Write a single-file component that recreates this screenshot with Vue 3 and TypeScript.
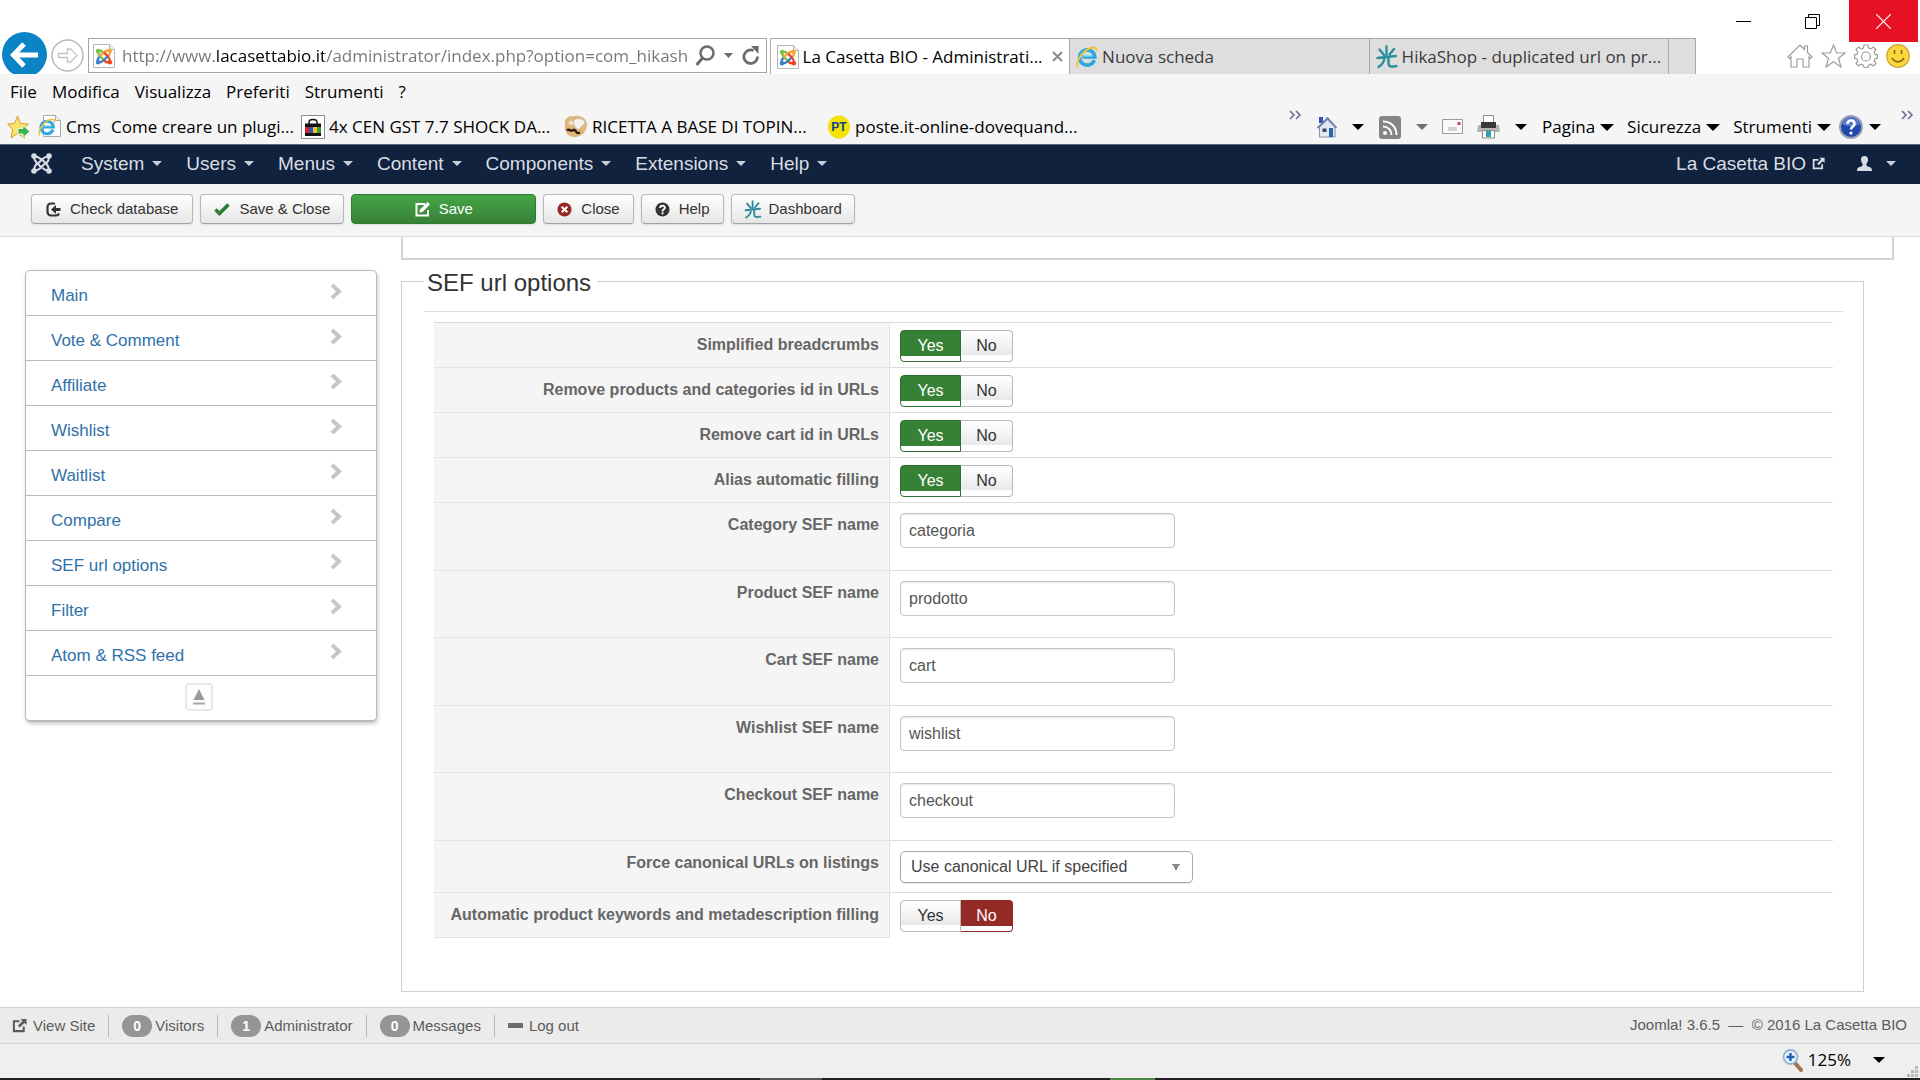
<script setup lang="ts">
import { ref } from 'vue'

interface Toggle { kind: 'toggle'; id: string; label: string; value: boolean }
interface TextField { kind: 'text'; id: string; label: string; value: string }
interface Choice { kind: 'select'; id: string; label: string; value: string }
type Option = Toggle | TextField | Choice

const url = ref('http://www.lacasettabio.it/administrator/index.php?option=com_hikash')
const browserMenu = ['File', 'Modifica', 'Visualizza', 'Preferiti', 'Strumenti', '?']
const adminMenu = ['System', 'Users', 'Menus', 'Content', 'Components', 'Extensions', 'Help']
const sections = [
  'Main', 'Vote & Comment', 'Affiliate', 'Wishlist', 'Waitlist',
  'Compare', 'SEF url options', 'Filter', 'Atom & RSS feed',
]
const counters = [
  { count: 0, label: 'Visitors' },
  { count: 1, label: 'Administrator' },
  { count: 0, label: 'Messages' },
]
const options = ref<Option[]>([
  { kind: 'toggle', id: 'breadcrumbs', label: 'Simplified breadcrumbs', value: true },
  { kind: 'toggle', id: 'remove-id', label: 'Remove products and categories id in URLs', value: true },
  { kind: 'toggle', id: 'remove-cart', label: 'Remove cart id in URLs', value: true },
  { kind: 'toggle', id: 'alias', label: 'Alias automatic filling', value: true },
  { kind: 'text', id: 'category', label: 'Category SEF name', value: 'categoria' },
  { kind: 'text', id: 'product', label: 'Product SEF name', value: 'prodotto' },
  { kind: 'text', id: 'cart', label: 'Cart SEF name', value: 'cart' },
  { kind: 'text', id: 'wishlist', label: 'Wishlist SEF name', value: 'wishlist' },
  { kind: 'text', id: 'checkout', label: 'Checkout SEF name', value: 'checkout' },
  { kind: 'select', id: 'canonical', label: 'Force canonical URLs on listings', value: 'Use canonical URL if specified' },
  { kind: 'toggle', id: 'keywords', label: 'Automatic product keywords and metadescription filling', value: false },
])
</script>

<template>
  <div class="window">
    <svg class="defs" width="0" height="0" aria-hidden="true">
      <defs>
        <symbol id="joomla-page" viewBox="0 0 22 24">
          <path d="M.5.5h16l5 5v18H.5z" fill="#fff" stroke="#b5b5b5" />
          <path d="M16.500.5v5h5" fill="#eee" stroke="#b5b5b5" />
          <g fill="none" stroke-width="2.400">
            <path d="M5 7.500c0 3 1 3.500 3 5.500l3.500 3.500M5 7c3-1 4 0 5 1.500" stroke="#7ac143" />
            <path d="M16 6.500c-3 0-4 .5-5.500 2L7 12M16.500 7c1 3 0 4-1.500 5" stroke="#f9a541" />
            <path d="M17 17.500c0-3-1-4-2.500-5.500L11 8.500M16.500 18c-3 1-4 0-5-1.500" stroke="#f44321" />
            <path d="M5.500 18.500c3 0 4-1 5.500-2.500l3.500-3.500M5 18c-1-3 0-4 1.500-5" stroke="#3f7fc4" />
          </g>
          <circle cx="5" cy="7" r="2.200" fill="#7ac143" />
          <circle cx="16.800" cy="6.800" r="2.200" fill="#f9a541" />
          <circle cx="17" cy="18.200" r="2.200" fill="#f44321" />
          <circle cx="5" cy="18.200" r="2.200" fill="#3f7fc4" />
        </symbol>
        <symbol id="ie" viewBox="0 0 24 24">
          <path d="M20 15.500A8.300 8.300 0 1 1 20.500 12H7" fill="none" stroke="#2ea7df" stroke-width="4" />
          <path d="M8 10.500h10" stroke="#8fdcf7" stroke-width="2" />
          <path d="M2.500 23C-1 18 6 6 15 2.500 20 .5 23 2 22 6" fill="none" stroke="#f3c232" stroke-width="2" />
        </symbol>
        <symbol id="hika" viewBox="0 0 22 24">
          <g fill="none" stroke="#2b8f9c" stroke-width="2.400" stroke-linecap="round">
            <path d="M10.500 1.500V12M3.500 4.500 8 10M18 4 13.500 9.500M1.500 13 20 11M8.500 12c0 5-2 7.500-6 10M12.500 12v6c0 4 3 4 8 3" />
          </g>
        </symbol>
        <symbol id="popout" viewBox="0 0 16 16">
          <path d="M8 3.500H2v10.500h10.500V9" fill="none" stroke="currentColor" stroke-width="2.200" />
          <path d="M9 1h6.500v6.500l-2.300-2.300-5 5-2-2 5-5z" fill="currentColor" />
        </symbol>
      </defs>
    </svg>

    <header class="titlebar">
      <div class="navigation">
        <button class="bare back" aria-label="Back">
          <svg width="46" height="42" viewBox="0 0 46 42"><circle cx="23.500" cy="22.500" r="22.500" fill="#0b84c6" /><path d="M37 23H13M23 12 12.500 23 23 34" fill="none" stroke="#fff" stroke-width="5" /></svg>
        </button>
        <button class="bare forward" aria-label="Forward">
          <svg width="33" height="33" viewBox="0 0 33 33"><circle cx="16.500" cy="16.500" r="15.500" fill="#fff" stroke="#b9b9b9" stroke-width="1.500" /><path d="M7.500 14.500h9V10h3l6.500 6.500-6.500 6.500h-3v-4.500h-9z" fill="#fff" stroke="#c4c4c4" stroke-width="1.300" /></svg>
        </button>
        <div class="address">
          <svg width="22" height="24"><use href="#joomla-page" /></svg>
          <input v-model="url" class="url" type="text" aria-label="Address">
          <svg width="20" height="22" viewBox="0 0 20 22"><circle cx="12" cy="8" r="6.500" fill="none" stroke="#6b6b6b" stroke-width="2.500" /><path d="M7.500 13 1.500 20" stroke="#6b6b6b" stroke-width="3" /></svg>
          <svg class="history" width="9" height="5" viewBox="0 0 9 5"><path d="M0 0h9L4.500 5z" fill="#6b6b6b" /></svg>
          <svg width="18" height="20" viewBox="0 0 18 20"><path d="M15.500 10.500a6.800 6.800 0 1 1-4-6" fill="none" stroke="#6b6b6b" stroke-width="2.800" /><path d="M9 0h7.500v8z" fill="#6b6b6b" /></svg>
        </div>
      </div>

      <div class="tabs">
        <a class="tab current" href="#"><svg width="22" height="24"><use href="#joomla-page" /></svg><span>La Casetta BIO - Administrati...</span><svg class="close" width="11" height="11" viewBox="0 0 11 11"><path d="m1 1 9 9M10 1 1 10" stroke="#8a8a8a" stroke-width="2" /></svg></a>
        <a class="tab" href="#"><svg width="22" height="24"><use href="#ie" /></svg><span>Nuova scheda</span></a>
        <a class="tab" href="#"><svg width="22" height="24"><use href="#hika" /></svg><span>HikaShop - duplicated url on pr...</span></a>
        <button class="bare new-tab" aria-label="New tab"></button>
      </div>

      <div class="corner">
        <div class="controls">
          <button class="bare" aria-label="Minimize"><svg width="15" height="15" viewBox="0 0 15 15"><path d="M0 7.500h15" stroke="#000" /></svg></button>
          <button class="bare" aria-label="Restore"><svg width="15" height="15" viewBox="0 0 15 15"><path d="M.5 3.500h11v11H.5zM3.500 3.500v-3h11v11h-3" fill="none" stroke="#000" /></svg></button>
          <button class="bare quit" aria-label="Close window"><svg width="15" height="15" viewBox="0 0 15 15"><path d="m0 0 15 15M15 0 0 15" stroke="#fff" stroke-width="1.200" /></svg></button>
        </div>
        <div class="tools">
          <svg width="26" height="24" viewBox="0 0 26 24"><path d="M1 13 13 1l4.500 4.500V2h3v6.500L25 13l-1.500 1.500L22 13v10h-6v-8h-6v8H4V13l-1.500 1.500z" fill="#fff" stroke="#9c9c9c" stroke-width="1.200" /></svg>
          <svg width="25" height="24" viewBox="0 0 25 24"><path d="m12.500 1 3.200 8H24l-6.500 5.200 2.500 8.800-7.500-5.300L5 23l2.500-8.800L1 9h8.300z" fill="#fff" stroke="#9c9c9c" stroke-width="1.200" /></svg>
          <svg width="24" height="24" viewBox="0 0 24 24"><path d="M10 1h4l.6 3 2.200.9L19.400 3 22 5.600l-1.800 2.600.9 2.200 2.400.4v3.400l-2.400.5-.9 2.200L22 19.400 19.400 22l-2.600-1.800-2.200.9L14 23.500h-4l-.6-2.400-2.200-.9L4.600 22 2 19.400l1.800-2.500-.9-2.200L.5 14.200v-3.400l2.400-.4.9-2.200L2 5.600 4.600 3l2.600 1.900L9.400 4z" fill="#fff" stroke="#9c9c9c" stroke-width="1.200" /><circle cx="12" cy="12.500" r="4.500" fill="#fff" stroke="#9c9c9c" stroke-width="1.200" /></svg>
          <svg width="24" height="24" viewBox="0 0 24 24"><circle cx="12" cy="12" r="11.300" fill="#fbd63d" stroke="#c9a437" stroke-width="1.200" /><path d="M8.500 6v4M15.500 6v4M6 14c3 5 9 5 12 0" fill="none" stroke="#8a6a14" stroke-width="1.600" /></svg>
        </div>
      </div>
    </header>

    <nav class="browser-menu" aria-label="Browser menu">
      <a v-for="item in browserMenu" :key="item" href="#">{{ item }}</a>
    </nav>

    <div class="link-bar">
      <div class="favourites">
        <svg width="24" height="24" viewBox="0 0 24 24"><path d="m10.500 1 3 7.500 8 .5-6 5.500 2 8.500-7-4.500L4 23l1.500-8.500L.8 9l6.700-.5z" fill="#fbe36b" stroke="#cfa02c" /><path d="M11 13.500h5v-3l7 6-7 6v-3.500h-5z" fill="#3fb24a" stroke="#eafbe6" /></svg>
        <svg width="23" height="24" viewBox="0 0 23 24"><path d="M5.500.5h12l5 5v16h-17z" fill="#fff" stroke="#a9a9a9" /><path d="M17.500.5v5h5" fill="#eee" stroke="#a9a9a9" /><use href="#ie" x="0" y="3" width="18" height="18" /></svg>
        <a href="#">Cms</a>
        <a href="#">Come creare un plugi...</a>
        <svg width="24" height="24" viewBox="0 0 24 24"><path d="M.5.5h23v23H.5z" fill="#fff" stroke="#8b8b8b" /><path d="M8 9V7c0-3.500 8-3.500 8 0v2" fill="none" stroke="#111" stroke-width="1.500" /><path d="M4 8.500h16V21H4z" fill="#111" /><path d="M4 12h4v6H4z" fill="#d22" /><path d="M8 12h4v6H8z" fill="#2459c4" /><path d="M12 12h4v6h-4z" fill="#f3c21b" /><path d="M16 12h4v6h-4z" fill="#3c9b35" /></svg>
        <a href="#">4x CEN GST 7.7 SHOCK DA...</a>
        <svg width="24" height="24" viewBox="0 0 24 24"><path d="M1 8C0 4 5 0 9 1.500 14-1 23 3 23 9c0 5-2 9-6 11-5 4-13 2-15-3C0 14 1 11 1 8z" fill="#dfb67c" /><path d="M10 5c4-3 11-1 11 3-1 3-5 3-6 7-3-1-7-5-5-10z" fill="#f6f2ec" stroke="#c3b39c" stroke-width=".8" /><circle cx="7" cy="8" r="2.500" fill="#f3e0bd" /><path d="M3 15.500c2-2 4 1 5.500 0s2.500-1 3.500 1 2 2 4 1" fill="none" stroke="#2d1a0f" stroke-width="2.500" /></svg>
        <a href="#">RICETTA A BASE DI TOPIN...</a>
        <svg width="22" height="24" viewBox="0 0 22 24"><ellipse cx="11" cy="12" rx="11" ry="11.500" fill="#f2e205" /><text x="11" y="16" text-anchor="middle" font-family="Liberation Sans, sans-serif" font-size="12" font-weight="700" fill="#15408f">PT</text></svg>
        <a href="#">poste.it-online-dovequand...</a>
      </div>
      <div class="commands">
        <svg class="more" width="13" height="10" viewBox="0 0 13 10"><path d="m1 1 4 4-4 4M7 1l4 4-4 4" fill="none" stroke="#6d6a9c" stroke-width="1.600" /></svg>
        <svg width="20" height="22" viewBox="0 0 20 22"><path d="M2 1h4v6H2z" fill="#3450b5" /><path d="M2.500 11v10h15.500V11L10.500 4z" fill="#e3e8ef" stroke="#8593ad" /><path d="M.5 12 10.500 2 19.500 12" fill="none" stroke="#6b7fae" stroke-width="1.800" /><path d="M12 12h4v9h-4z" fill="#2f63b3" /><path d="M5.500 12.500h4V16h-4z" fill="#3a4a66" /></svg>
        <i class="caret"></i>
        <svg width="22" height="23" viewBox="0 0 22 23"><rect width="22" height="23" rx="3" fill="#858585" /><circle cx="6" cy="17" r="2" fill="#fff" /><path d="M4 10.500c5 0 8.500 3.500 8.500 8.500M4 5.500C12 5.500 17.500 11 17.500 19" fill="none" stroke="#fff" stroke-width="2" /></svg>
        <i class="caret muted"></i>
        <svg width="21" height="16" viewBox="0 0 21 16"><path d="M.5.5h20v14H.5z" fill="#fafafa" stroke="#9a9a9a" /><path d="M15.500 3h3v3h-3z" fill="#d0455b" /><path d="M6 9h9M6 11h9" stroke="#a9a9b5" /></svg>
        <svg width="23" height="24" viewBox="0 0 23 24"><path d="M6.500.5h10V9h-10z" fill="#fff" stroke="#8b8b8b" /><path d="M1 10h21l1 7H0z" fill="#b5b5b5" /><path d="M4 7h15v6H4z" fill="#3a3a3a" /><path d="M5.500 15.500h12v7.500h-12z" fill="#fff" stroke="#888" /><path d="M9 16h5v6H9z" fill="#2a9fb5" /></svg>
        <i class="caret"></i>
        <a href="#">Pagina<i class="caret wide"></i></a>
        <a href="#">Sicurezza<i class="caret wide"></i></a>
        <a href="#">Strumenti<i class="caret wide"></i></a>
        <svg width="24" height="24" viewBox="0 0 24 24"><circle cx="12" cy="12" r="11" fill="#1f49ad" stroke="#9aa3b5" stroke-width="2" /><path d="M3 9a9.500 9.500 0 0 1 18 0c-5 3-13 3-18 0z" fill="#6d92e0" opacity=".7" /><path d="M8.500 9c0-5 7.500-4.500 7 0-.3 2.500-3.500 2.500-3.500 5.500" fill="none" stroke="#fff" stroke-width="2.600" /><circle cx="12" cy="18" r="1.600" fill="#fff" /></svg>
        <i class="caret help-caret"></i>
        <svg class="more" width="13" height="10" viewBox="0 0 13 10"><path d="m1 1 4 4-4 4M7 1l4 4-4 4" fill="none" stroke="#6d6a9c" stroke-width="1.600" /></svg>
      </div>
    </div>

    <nav class="admin-menu" aria-label="Administration">
      <svg class="logo" width="21" height="21" viewBox="0 0 21 21"><g fill="none" stroke="#d9dde3" stroke-width="2.200"><path d="M3 3.500c0 3 .5 4 2.500 6l5.500 5.500M3 3.500c3 0 4.500.5 6 2l1.500 1.500M18 3.500c-3 0-4.500.5-6.500 2.500L6 11.500M18 3.500c0 3-.5 4.500-2.500 6.500M18 17.500c0-3-.5-4.500-2.500-6.500L10 5.500M18 17.500c-3 0-4.500-.5-6.500-2.500M3 17.500c3 0 4.500-.5 6.500-2.500L15 9.500M3 17.500c0-3 .5-4.500 2.500-6.500" /></g><g fill="#d9dde3"><circle cx="3" cy="3" r="2.800" /><circle cx="18" cy="3" r="2.800" /><circle cx="3" cy="18" r="2.800" /><circle cx="18" cy="18" r="2.800" /></g></svg>
      <a v-for="item in adminMenu" :key="item" href="#">{{ item }}<i class="caret small"></i></a>
      <a class="site" href="#">La Casetta BIO<svg width="13" height="13"><use href="#popout" width="13" height="13" /></svg></a>
      <a class="user" href="#" aria-label="User menu"><svg width="15" height="15" viewBox="0 0 15 15"><path d="M7.500 0c2.500 0 3.800 1.800 3.500 4-.2 2-1 3.200-1.700 4 0 2 .7 2 3 3 2 .8 2.700 1.500 2.700 4H0c0-2.500.7-3.200 2.700-4 2.300-1 3-1 3-3C5 7.200 4.200 6 4 4c-.3-2.200 1-4 3.500-4z" fill="#d9dde3" /></svg><i class="caret small"></i></a>
    </nav>

    <div class="toolbar">
      <button class="action roomy"><svg width="15" height="15" viewBox="0 0 15 15"><path d="M9 1.500H5A3.500 3.500 0 0 0 1.500 5v5A3.500 3.500 0 0 0 5 13.500h5c1.500 0 2.500-.8 3-2" fill="none" stroke="#333" stroke-width="2.200" /><path d="M5 7.500 10 3v3h4.500v3H10v3z" fill="#333" /></svg>Check database</button>
      <button class="action"><svg width="16" height="13" viewBox="0 0 16 13"><path d="m1.500 6.500 4 4L14.500 1.500" fill="none" stroke="#2f7d32" stroke-width="3.600" /></svg>Save &amp; Close</button>
      <button class="action primary"><svg width="15" height="15" viewBox="0 0 15 15"><path d="M10 2H1.500v11.500H13V8" fill="none" stroke="#fff" stroke-width="2" /><path d="M5 7.500 12.500 0 15 2.500 7.500 10 4.500 10.500z" fill="#fff" /></svg>Save</button>
      <button class="action"><svg width="15" height="15" viewBox="0 0 16 16"><circle cx="8" cy="8" r="7.500" fill="#942a25" /><path d="m5 5 6 6M11 5l-6 6" stroke="#fff" stroke-width="2.200" /></svg>Close</button>
      <button class="action"><svg width="15" height="15" viewBox="0 0 16 16"><circle cx="8" cy="8" r="7.500" fill="#333" /><path d="M5.500 6.500c0-3.500 5-3.200 5-.5 0 1.800-2.500 1.800-2.500 4" fill="none" stroke="#fff" stroke-width="2" /><circle cx="8" cy="12" r="1.200" fill="#fff" /></svg>Help</button>
      <button class="action compact"><svg width="18" height="19" viewBox="0 0 22 24"><use href="#hika" /></svg>Dashboard</button>
    </div>

    <main class="page">
      <nav class="sections" aria-label="Configuration sections">
        <a v-for="section in sections" :key="section" href="#">{{ section }}<svg width="12" height="17" viewBox="0 0 12 17"><path d="m2 2 7 6.500L2 15" fill="none" stroke="#c6c6c6" stroke-width="4" /></svg></a>
        <div class="to-top">
          <button aria-label="Back to top"><svg width="14" height="17" viewBox="0 0 14 17"><path d="M7 0 12.500 11h-11z" fill="#999" /><path d="M1 14.500h12" stroke="#aaa" stroke-width="2" /></svg></button>
        </div>
      </nav>

      <form class="settings" @submit.prevent>
        <div class="previous-group"></div>
        <fieldset class="group">
          <legend>SEF url options</legend>
          <table>
            <tbody>
              <tr v-for="option in options" :key="option.id" :class="option.kind">
                <th scope="row"><label :for="option.kind === 'toggle' ? option.id + '-yes' : option.id">{{ option.label }}</label></th>
                <td>
                  <div v-if="option.kind === 'toggle'" class="switch">
                    <label :class="{ yes: option.value }"><input :id="option.id + '-yes'" v-model="option.value" type="radio" :name="option.id" :value="true">Yes</label>
                    <label :class="{ no: !option.value }"><input v-model="option.value" type="radio" :name="option.id" :value="false">No</label>
                  </div>
                  <input v-else-if="option.kind === 'text'" :id="option.id" v-model="option.value" class="field" type="text">
                  <select v-else :id="option.id" v-model="option.value" class="chooser">
                    <option>Use canonical URL if specified</option>
                  </select>
                </td>
              </tr>
            </tbody>
          </table>
        </fieldset>
        <fieldset class="group">
          <legend>Filter</legend>
        </fieldset>
      </form>
    </main>

    <footer class="footer">
      <a href="#"><svg width="15" height="15"><use href="#popout" width="15" height="15" /></svg>View Site</a>
      <a v-for="counter in counters" :key="counter.label" href="#"><span class="badge">{{ counter.count }}</span>{{ counter.label }}</a>
      <a class="logout" href="#"><i class="dash"></i>Log out</a>
      <p>Joomla! 3.6.5 &nbsp;—&nbsp; © 2016 La Casetta BIO</p>
    </footer>

    <div class="statusbar">
      <button class="bare zoom">
        <svg width="21" height="23" viewBox="0 0 21 23"><path d="m13 14 6 7" stroke="#a5714a" stroke-width="4" stroke-linecap="round" /><circle cx="8.500" cy="8" r="7" fill="#e8f3fc" stroke="#8fb1d6" stroke-width="1.800" /><path d="M8.500 4v8M4.500 8h8" stroke="#1c5fb4" stroke-width="2.400" /></svg>
        125%<i class="caret"></i>
      </button>
      <svg class="grip" width="12" height="12" viewBox="0 0 12 12"><path d="M9 0h3v3H9zM9 4h3v3H9zM5 4h3v3H5zM9 8h3v3H9zM5 8h3v3H5zM1 8h3v3H1z" fill="#b9b9b9" /></svg>
    </div>
    <div class="taskbar"><i class="open"></i><i class="running"></i></div>
  </div>
</template>

<style>
body { margin: 0; background: #fff; }
</style>

<style scoped>
* { box-sizing: border-box; }
.window {
  display: flex;
  flex-direction: column;
  height: 100vh;
  overflow: hidden;
  color: #000;
  font: 17px/24px "Open Sans", "Noto Sans", sans-serif;
}
.defs { display: block; flex: none; }
a { color: inherit; text-decoration: none; white-space: nowrap; }
svg { flex: none; }
.bare { display: flex; align-items: center; justify-content: center; padding: 0; border: 0; background: none; color: inherit; font: inherit; }

/* caption area: address, tabs and window controls */
.titlebar { display: flex; flex: none; align-items: flex-end; height: 74px; }
.navigation { display: flex; flex: 770; align-items: flex-end; min-width: 0; }
.back { margin-left: 1px; }
.forward { margin: 0 4px 2px 4px; }
.address { display: flex; flex: 1; align-items: center; gap: 7px; min-width: 0; height: 35px; margin: 0 3px 1px 0; padding: 0 6px 0 4px; border: 1px solid #a5a5a5; }
.url {
  flex: 1;
  min-width: 0;
  height: 30px;
  margin-right: -4px;
  padding: 0;
  border: 0;
  background: linear-gradient(90deg, #767676 94px, #000 94px 202px, #767676 202px) text;
  color: transparent;
  font: inherit;
}
.history { margin: 0 2px; }
.tabs { display: flex; flex: 926; min-width: 0; height: 36px; background: #dedede; border-top: 1px solid #a9a9a9; border-right: 1px solid #a9a9a9; }
.tab { display: flex; flex: 1; align-items: center; gap: 4px; min-width: 0; padding: 0 6px; border-right: 1px solid #a9a9a9; color: #3b3b3b; }
.tab span { flex: 1; overflow: hidden; }
.tab.current { background: #fff; color: #000; border-left: 1px solid #a9a9a9; }
.new-tab { width: 26px; }
.corner { display: flex; flex: 224; flex-direction: column; min-width: 0; height: 74px; align-items: flex-end; }
.controls { display: flex; padding-right: 2px; }
.controls .bare { width: 69px; height: 42px; }
.controls .quit { margin-left: 2px; background: #e81123; }
.tools { display: flex; gap: 8px; padding: 2px 10px 0 0; }

.browser-menu { display: flex; flex: none; gap: 15px; height: 36px; padding: 0 10px; align-items: center; background: #f5f5f5; }

.link-bar { display: flex; flex: none; justify-content: space-between; height: 34px; background: #f5f5f5; }
.favourites { display: grid; grid-template-columns: 31px 28px 45px 190px 28px 235px 28px 236px 27px 226px; align-items: center; padding-left: 7px; }
.commands { display: flex; align-items: center; padding-right: 6px; }
.commands a { display: flex; align-items: center; gap: 5px; margin-right: 13px; }
.commands a:last-of-type { margin-right: 8px; }
.more { align-self: flex-start; margin: 0 15px 0 0; }
.help-caret + .more { margin: 0 0 0 20px; }
.caret { flex: none; width: 0; height: 0; border: solid transparent; border-width: 6px 6px 0; border-top-color: #000; }
.commands > .caret { margin: 0 15px; }
.commands > .help-caret { margin: 0 0 0 6px; }
.commands > .muted { border-top-color: #707070; margin-right: 14px; }
.muted + svg { margin-right: 14px; }
.caret.wide { border-width: 7px 7px 0; }
.caret.small { border-width: 5px 5px 0; border-top-color: #c9ced6; }

.admin-menu {
  display: flex;
  flex: none;
  align-items: center;
  gap: 24px;
  height: 40px;
  padding: 0 24px 2px 31px;
  border-top: 1px solid #5e6878;
  background: #10223e;
  color: #d9dde3;
  font: 19px/24px "Liberation Sans", Arial, sans-serif;
}
.admin-menu a { display: flex; align-items: center; gap: 8px; }
.admin-menu .logo { margin-right: 5px; }
.admin-menu .site { margin-left: auto; gap: 6px; }
.admin-menu .user { margin-left: 8px; gap: 14px; }

.toolbar { display: flex; flex: none; gap: 7px; height: 53px; padding: 10px 31px 12px; border-bottom: 1px solid #dcdcdc; background: #f5f5f5; }
.action {
  display: flex;
  align-items: center;
  justify-content: center;
  gap: 9px;
  height: 30px;
  padding: 0 13px;
  border: 1px solid #b8b8b8;
  border-bottom-color: #a2a2a2;
  border-radius: 4px;
  background: linear-gradient(#fff, #e6e6e6);
  box-shadow: 0 1px 2px rgba(0, 0, 0, .1);
  color: #333;
  font: 15px/20px "Liberation Sans", Arial, sans-serif;
}
.roomy { padding: 0 14px; }
.compact { gap: 7px; padding: 0 12px; }
.primary { width: 185px; border-color: #2f7d32; background: linear-gradient(#46a546, #378137); color: #fff; }

.page { display: flex; flex: 1; gap: 24px; min-height: 0; padding: 0 26px 0 25px; overflow: hidden; font: 16px/20px "Liberation Sans", Arial, sans-serif; }
.sections { flex: none; align-self: flex-start; width: 352px; margin-top: 33px; border: 1px solid #b9b9b9; border-bottom-width: 2px; border-radius: 5px; box-shadow: 1px 2px 4px rgba(0, 0, 0, .2); }
.sections a { display: flex; justify-content: space-between; height: 45px; padding: 15px 34px 0 25px; border-bottom: 1px solid #b9b9b9; color: #3071a9; font-size: 17px; }
.sections a svg { margin-top: -3px; }
.to-top { display: flex; justify-content: center; height: 44px; padding: 7px 4px 0 0; }
.to-top button { display: flex; align-items: center; justify-content: center; width: 28px; height: 28px; padding: 0; border: 2px solid #e9e9e9; border-radius: 4px; background: #fdfdfd; }

.settings { flex: 1; min-width: 0; }
.previous-group { height: 23px; margin-bottom: 1px; border: solid #d3d3d3; border-width: 0 2px 2px; }
.group { min-width: 0; margin: 0 30px 2px 0; padding: 0 20px 53px 22px; border: 1px solid #cfcfcf; }
.group legend { padding: 4px 6px 0 3px; color: #333; font-size: 24px; line-height: 36px; }
.group table { display: block; width: 100%; margin-top: 10px; padding: 10px 10px 0; border-top: 1px solid #dcdcdc; }
tbody { display: block; border-top: 1px solid #dcdcdc; }
tr { display: flex; height: 45px; }
tr.text { height: 68px; }
tr.text:nth-child(even) { height: 67px; }
tr.select { height: 52px; }
th { flex: none; width: 456px; padding: 12px 10px 0 0; border-right: 1px solid #e3e3e3; border-bottom: 1px solid #e3e3e3; background: #f5f5f5; color: #666; font-weight: 700; text-align: right; white-space: nowrap; }
td { flex: 1; padding: 7px 0 0 10px; border-bottom: 1px solid #dcdcdc; }
tr.text td, tr.select td { padding-top: 10px; }
tr:last-child td { border-bottom-color: transparent; }

.switch { display: inline-flex; }
.switch label { display: block; width: 52px; height: 32px; padding-top: 5px; border: 1px solid #b8b8b8; border-left: 0; border-radius: 0 4px 4px 0; background: linear-gradient(#fff, #e9e9e9 24px, #fff 24px); color: #333; text-align: center; }
.switch label:first-child { width: 61px; border-left: 1px solid #b8b8b8; border-radius: 4px 0 0 4px; }
.switch input { position: absolute; opacity: 0; }
.switch .yes, .switch .yes:first-child { border-color: #2d6f30; border-right: 1px solid #2d6f30; background: linear-gradient(#378137 25px, #fff 25px); color: #fff; }
.switch .no { border-color: #942a25; background: linear-gradient(#942a25 25px, #fff 25px); color: #fff; }
.field { display: block; width: 275px; height: 35px; padding: 0 8px; border: 1px solid #c6c6c6; border-radius: 4px; box-shadow: inset 0 1px 2px rgba(0, 0, 0, .1); color: #555; font: inherit; }
.chooser {
  display: block;
  width: 293px;
  height: 32px;
  padding: 0 10px;
  border: 1px solid #a9a9a9;
  border-radius: 5px;
  appearance: none;
  background: #fff conic-gradient(from -29deg at 50% 100%, #888 58deg, transparent 58deg) 271px 12px / 8px 7px no-repeat;
  box-shadow: 0 1px 1px rgba(0, 0, 0, .1);
  color: #444;
  font: inherit;
}

.footer { display: flex; flex: none; align-items: center; height: 37px; padding: 0 13px 0 12px; border-top: 1px solid #cfcfcf; border-bottom: 1px solid #cfcfcf; background: #ebebeb; color: #5b5b5b; font: 15px/22px "Liberation Sans", Arial, sans-serif; }
.footer a { display: flex; align-items: center; gap: 3px; margin-right: 13px; padding-right: 13px; border-right: 1px solid #b9b9b9; }
.footer a:first-child, .footer .logout { gap: 6px; }
.footer .logout { border: 0; }
.footer p { margin: 0 0 2px auto; }
.badge { width: 30px; height: 22px; border-radius: 11px; background: #959595; color: #fff; font-weight: 700; font-size: 14px; text-align: center; }
.dash { width: 15px; height: 5px; background: #6b6b6b; }

.statusbar { display: flex; flex: none; justify-content: flex-end; height: 34px; padding-right: 2px; background: #efefef; }
.zoom { gap: 5px; padding-bottom: 2px; }
.zoom .caret { margin: 0 21px 0 17px; }
.grip { align-self: flex-end; }
.taskbar { display: flex; flex: none; height: 2px; background: #231f20; }
.taskbar i { width: 62px; margin-left: 760px; background: #555; }
.taskbar .running { width: 45px; margin-left: 288px; background: #4d8a47; }
</style>
